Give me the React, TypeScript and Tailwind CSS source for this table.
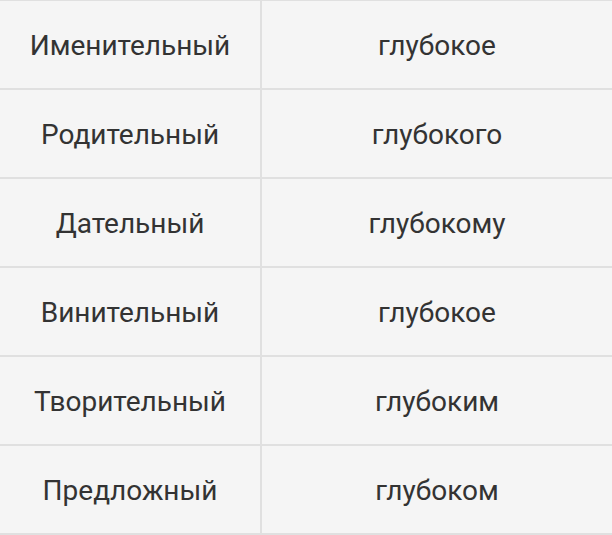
import React from "react";

const rows: [string, string][] = [
  ["Именительный", "глубокое"],
  ["Родительный", "глубокого"],
  ["Дательный", "глубокому"],
  ["Винительный", "глубокое"],
  ["Творительный", "глубоким"],
  ["Предложный", "глубоком"],
];

export default function App() {
  return (
    <div
      className="w-[612px] h-[535px] bg-[#f5f5f5] border-t border-[#e0e0e0] text-[#333333]"
      style={{ fontFamily: "Roboto, 'Noto Sans', sans-serif" }}
    >
      {rows.map(([a, b]) => (
        <div key={a} className="flex h-[89px] border-b-2 border-[#e0e0e0]">
          <div className="w-[260px] flex items-center justify-center pt-[3px] text-[28px]">
            {a}
          </div>
          <div className="w-[2px] bg-[#e0e0e0]" />
          <div className="flex-1 flex items-center justify-center pt-[3px] text-[28px]">
            {b}
          </div>
        </div>
      ))}
    </div>
  );
}
